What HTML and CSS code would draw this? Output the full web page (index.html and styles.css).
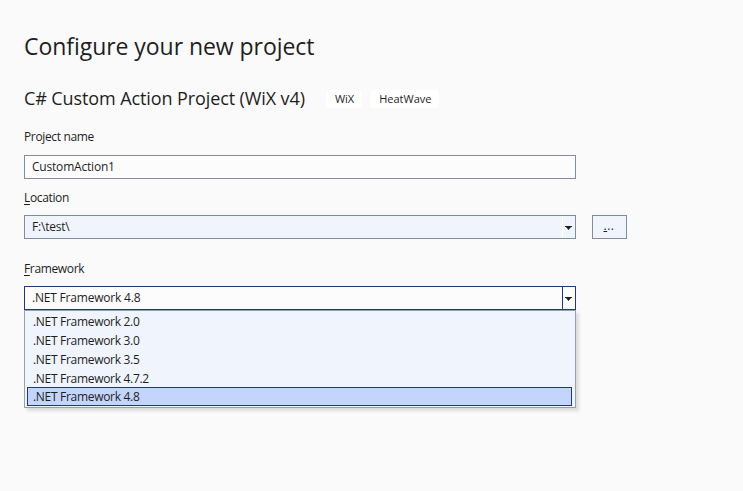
FILE: index.html
```html
<!DOCTYPE html>
<html>
<head>
<meta charset="utf-8">
<link rel="stylesheet" href="styles.css">
</head>
<body>
<div class="page">
  <h1 class="title">Configure your new project</h1>
  <div class="subtitle-row">
    <span class="subtitle">C# Custom Action Project (WiX v4)</span>
    <span class="tag">WiX</span>
    <span class="tag">HeatWave</span>
  </div>

  <div class="field field-name">
    <div class="label">Project name</div>
    <div class="textbox"><span class="value">CustomAction1</span></div>
  </div>

  <div class="field field-location">
    <div class="label"><u>L</u>ocation</div>
    <div class="row">
      <div class="combo combo-location">
        <span class="value">F:\test\</span>
        <span class="arrow-box arrow-light">
          <svg width="7" height="4" viewBox="0 0 7 4"><path d="M0 0H7V1H6L3.5 4L1 1H0Z" fill="#1e1e1e"/></svg>
        </span>
      </div>
      <div class="browse"><span><u>.</u>..</span></div>
    </div>
  </div>

  <div class="field field-framework">
    <div class="label"><u>F</u>ramework</div>
    <div class="framework-wrap">
      <div class="combo combo-focus">
        <span class="value">.NET Framework 4.8</span>
        <span class="arrow-box arrow-dark">
          <svg width="7" height="4" viewBox="0 0 7 4"><path d="M0 0H7V1H6L3.5 4L1 1H0Z" fill="#1e1e1e"/></svg>
        </span>
      </div>
      <ul class="dropdown">
        <li class="item">.NET Framework 2.0</li>
        <li class="item">.NET Framework 3.0</li>
        <li class="item">.NET Framework 3.5</li>
        <li class="item">.NET Framework 4.7.2</li>
        <li class="item item-selected">.NET Framework 4.8</li>
      </ul>
    </div>
  </div>
</div>
</body>
</html>
```

FILE: styles.css
```css
html, body {
  margin: 0;
  padding: 0;
  background: #fafafa;
}
body {
  font-family: "Open Sans", "Noto Sans", sans-serif;
  color: #1e1e1e;
  width: 743px;
  height: 491px;
  overflow: hidden;
}
.page {
  padding: 0 24px;
}
.title {
  margin: 31px 0 0 0;
  font-size: 23px;
  font-weight: 400;
  line-height: 30px;
  letter-spacing: -0.05px;
}
.subtitle-row {
  margin-top: 25px;
  height: 24px;
  display: flex;
  align-items: center;
}
.subtitle {
  font-size: 18px;
  line-height: 24px;
  letter-spacing: -0.1px;
  margin-right: 21px;
}
.tag {
  background: #ffffff;
  border-radius: 4px;
  height: 18px;
  line-height: 18px;
  padding: 0 8px 0 9px;
  font-size: 11px;
  margin-right: 8px;
  margin-top: 1px;
}
.label {
  font-size: 12px;
  line-height: 16px;
  letter-spacing: -0.35px;
}
.label u {
  text-underline-offset: 2px;
}
.field-name { margin-top: 19px; }
.field-name .label { margin-bottom: 10px; }
.field-location { margin-top: 11px; }
.field-location .label { margin-bottom: 9px; }
.field-framework { margin-top: 22px; }
.field-framework .label { margin-bottom: 9px; }

.textbox, .combo {
  box-sizing: border-box;
  width: 552px;
  height: 24px;
  border: 1px solid #808ca2;
  background: #fcfcfc;
  font-size: 12px;
  line-height: 22px;
  letter-spacing: -0.2px;
  display: flex;
  align-items: center;
}
.value {
  padding-left: 7px;
  flex: 1;
  white-space: nowrap;
}
.row {
  display: flex;
  align-items: flex-start;
  gap: 16px;
}
.combo-location {
  background: #f0f4fc;
}
.arrow-box {
  box-sizing: border-box;
  width: 13px;
  height: 100%;
  display: flex;
  align-items: center;
  justify-content: center;
  padding-right: 1px;
}
.arrow-light {
  border-left: 1px solid #ffffff;
}
.arrow-dark {
  border-left: 1px solid #1e3a7a;
}
.arrow-box svg {
  display: block;
  margin-top: 1px;
}
.browse {
  box-sizing: border-box;
  width: 35px;
  height: 24px;
  border: 1px solid #808ca2;
  background: #f0f4fc;
  font-size: 12px;
  display: flex;
  align-items: center;
  justify-content: center;
  letter-spacing: 0.5px;
}
.browse span {
  margin-top: -3px;
  margin-left: -1px;
}
.framework-wrap {
  position: relative;
  width: 552px;
}
.combo-focus {
  border-color: #1e3a7a;
  background: #fcfcfc;
}
.dropdown {
  position: absolute;
  left: 0;
  top: 24px;
  box-sizing: border-box;
  width: 552px;
  margin: 0;
  padding: 0 3px 1px 2px;
  list-style: none;
  background: #f0f4fc;
  border: 1px solid #97a0b0;
  box-shadow: 3px 3px 3px rgba(0, 0, 0, 0.12);
  font-size: 12px;
  letter-spacing: -0.3px;
}
.item {
  box-sizing: border-box;
  height: 19px;
  line-height: 19px;
  padding-left: 5px;
  border: 1px solid transparent;
}
.item-selected {
  background: #c4d5fd;
  border-color: #1e3a7a;
  line-height: 17px;
}
```
